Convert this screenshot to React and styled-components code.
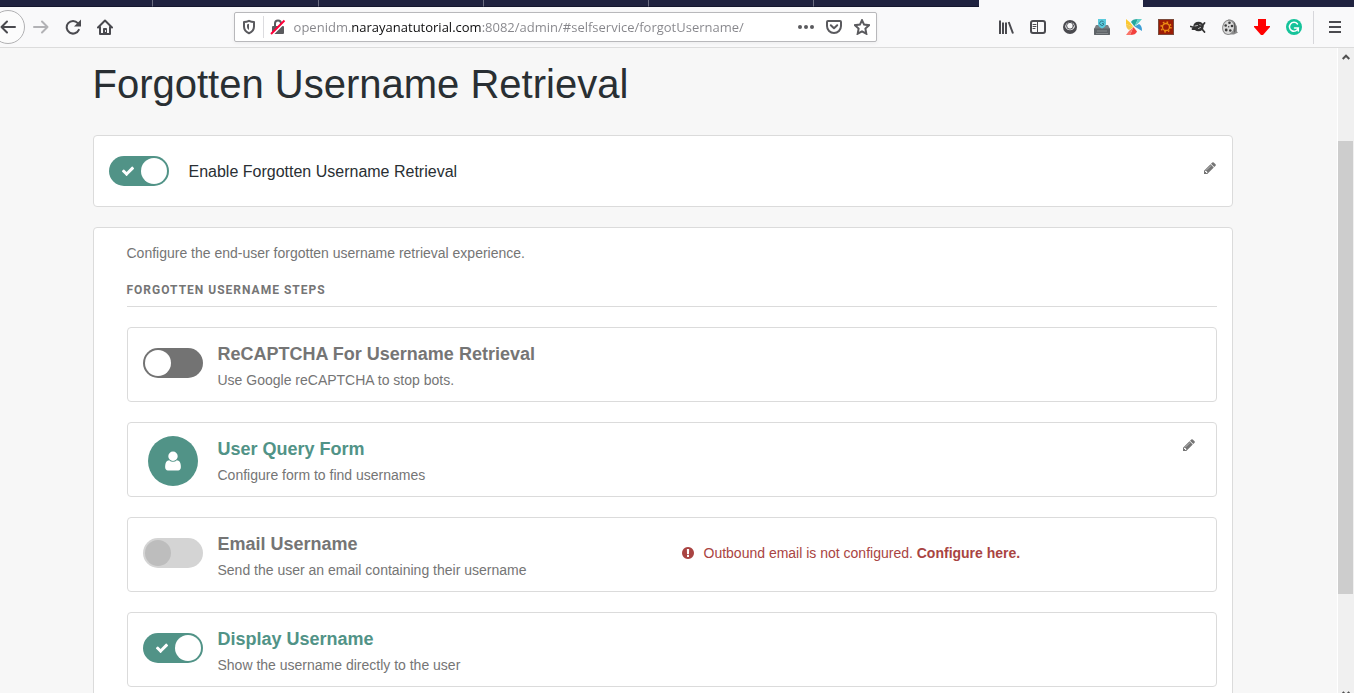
import React, { useState } from 'react';
import styled, { createGlobalStyle, ThemeProvider } from 'styled-components';

const theme = {
  colors: {
    primary: '#519387',
    text: '#292f33',
    muted: '#757575',
    border: '#dbdbdb',
    page: '#f7f7f7',
    danger: '#a94442',
    chrome: '#f9f9fa',
    chromeIcon: '#4a4a4f',
    tabs: '#202340',
  },
  fonts: {
    page: '"Liberation Sans", Arial, sans-serif',
    heading: 'Roboto, "Liberation Sans", sans-serif',
    chrome: '"Open Sans", "Noto Sans", sans-serif',
  },
};

const GlobalStyle = createGlobalStyle`
  * {
    box-sizing: border-box;
  }

  body {
    margin: 0;
    overflow: hidden;
    font-family: ${props => props.theme.fonts.page};
    font-size: 14px;
    line-height: 20px;
    color: ${props => props.theme.colors.muted};
    background: ${props => props.theme.colors.page};
  }

  button {
    background: none;
    border: none;
    padding: 0;
    color: inherit;
    cursor: pointer;
  }
`;

const Browser = styled.div`
  display: flex;
  flex-direction: column;
  height: 100vh;
`;

const TabStrip = styled.div`
  display: flex;
  flex: none;
  height: 7px;
  padding-right: 211px;
  background: ${props => props.theme.colors.tabs};
`;

const Tab = styled.div`
  flex: ${props => (props.$cut ? 153 : 165)} 1 0;
  background: ${props => (props.$active ? props.theme.colors.chrome : 'transparent')};
  border-right: ${props => (props.$last ? 'none' : '1px solid #6b6d80')};
  border-bottom: ${props => (props.$active ? 'none' : '1px solid #15172e')};
`;

const Toolbar = styled.div`
  display: flex;
  align-items: center;
  flex: none;
  height: 41px;
  background: ${props => props.theme.colors.chrome};
  border-bottom: 1px solid #dcdcdc;
  color: ${props => props.theme.colors.chromeIcon};
`;

const ToolButton = styled.button`
  display: flex;
  align-items: center;
  justify-content: center;
  flex: none;
  width: ${props => (props.$small ? '28px' : '32px')};
  height: 28px;
  opacity: ${props => (props.disabled ? 0.4 : 1)};
`;

const BackButton = styled(ToolButton)`
  width: 34px;
  height: 34px;
  margin-left: -9px;
  border: 1px solid #b1b1b3;
  border-radius: 50%;
  background: #fcfcfc;
`;

const MenuButton = styled(ToolButton)`
  width: 41px;
  height: 33px;
  margin-left: 3px;
  padding-left: 2px;
  border-left: 1px solid #d7d7db;
`;

const Spacer = styled.div`
  flex: 10 1 0;
`;

const AddressBar = styled.div`
  display: flex;
  align-items: center;
  flex: 57 1 0;
  height: 30px;
  background: #fff;
  border: 1px solid #b8b8bb;
  border-radius: 2px;
  box-shadow: 0 1px 4px rgba(0, 0, 0, 0.06);
  color: #5a5a5e;
`;

const Divider = styled.div`
  width: 1px;
  height: 22px;
  background: #dcdcdf;
`;

/* the host part of the address is darker than the rest */
const Address = styled.input`
  flex: 1;
  min-width: 0;
  height: 24px;
  margin-left: 2px;
  padding: 0;
  border: none;
  outline: none;
  font-family: ${props => props.theme.fonts.chrome};
  font-size: 13px;
  background: linear-gradient(90deg, #85858a 58px, #0c0c0d 58px, #0c0c0d 188px, #85858a 188px);
  -webkit-background-clip: text;
  background-clip: text;
  -webkit-text-fill-color: transparent;
`;

const Viewport = styled.div`
  display: flex;
  flex: 1;
  min-height: 0;
`;

const Main = styled.main`
  flex: 1;
  overflow: hidden;
  padding: 14px 12px 0 0;
`;

const Container = styled.div`
  max-width: 1140px;
  margin: 0 auto;
`;

const Title = styled.h1`
  margin: 0 0 29px;
  font-size: 40px;
  font-weight: 400;
  line-height: 44px;
  color: ${props => props.theme.colors.text};
`;

const Card = styled.section`
  margin-bottom: 20px;
  background: #fff;
  border: 1px solid ${props => props.theme.colors.border};
  border-radius: 4px;
`;

const EnableCard = styled(Card)`
  display: flex;
  align-items: flex-start;
  padding: 20px 15px;
`;

const EnableLabel = styled.label`
  flex: 1;
  margin-left: 20px;
  padding-top: 6px;
  font-size: 16px;
  color: ${props => props.theme.colors.text};
`;

const StepsCard = styled(Card)`
  padding: 15px 15px 15px 33px;
`;

const Intro = styled.p`
  margin: 0;
`;

const StepsHeading = styled.h2`
  margin: 17px 0 20px;
  padding-bottom: 6px;
  border-bottom: 1px solid ${props => props.theme.colors.border};
  font-family: ${props => props.theme.fonts.heading};
  font-size: 12px;
  font-weight: 700;
  line-height: 20px;
  letter-spacing: 1px;
  text-transform: uppercase;
`;

const StepRow = styled.div`
  display: flex;
  align-items: flex-start;
  margin-bottom: 20px;
  border: 1px solid ${props => props.theme.colors.border};
  border-radius: 4px;
`;

const StepIcon = styled.div`
  display: flex;
  justify-content: center;
  width: 60px;
  margin: ${props => (props.$round ? '13px' : '20px')} 15px 0;
`;

const StepText = styled.div`
  flex: 1;
  padding: 16px 0 11px;
`;

const StepTitle = styled.h3`
  margin: 0 0 6px;
  font-size: 18px;
  font-weight: 700;
  line-height: 20px;
  color: ${props => (props.$on ? props.theme.colors.primary : props.theme.colors.muted)};
`;

const StepDescription = styled.p`
  margin: 0;
`;

const StepAlert = styled.div`
  display: flex;
  align-items: center;
  width: 50%;
  padding: 25px 10px 0 9px;
  color: ${props => props.theme.colors.danger};

  svg {
    margin-right: 9px;
  }
`;

const AlertLink = styled.a`
  font-weight: 700;
  color: inherit;
  text-decoration: none;
`;

const EditButton = styled.button`
  display: flex;
  align-items: center;
  height: 24px;
  margin: ${props => (props.$inRow ? '10px 20px 0 0' : '0')};
`;

const Badge = styled.div`
  display: flex;
  align-items: center;
  justify-content: center;
  width: 50px;
  height: 50px;
  border-radius: 50%;
  background: ${props => props.theme.colors.primary};
  color: #fff;
`;

const Track = styled.span`
  display: flex;
  align-items: center;
  justify-content: ${props => (props.$on ? 'space-between' : 'flex-start')};
  width: 60px;
  height: 30px;
  padding: 0 2px 0 ${props => (props.$on ? '12px' : '2px')};
  border-radius: 15px;
  background: ${props => (props.$on ? props.theme.colors.primary : '#737373')};
  color: #fff;
`;

const Knob = styled.span`
  width: 26px;
  height: 26px;
  border-radius: 50%;
  background: #fff;
`;

const Switch = styled.label`
  display: block;
  flex: none;
  cursor: pointer;

  input {
    position: absolute;
    opacity: 0;
    width: 1px;
    height: 1px;
    margin: 0;
  }

  input:disabled + ${Track} {
    background: #d4d4d4;
  }

  input:disabled + ${Track} ${Knob} {
    background: #bdbdbd;
  }
`;

const Scrollbar = styled.div`
  display: flex;
  flex-direction: column;
  width: 17px;
  padding-right: 1px;
  border-left: 1px solid #fff;
  background: #f0f0f0;
  color: #505050;
`;

const ScrollArrow = styled.div`
  display: flex;
  justify-content: center;
  flex: none;
  height: ${props => (props.$down ? '8px' : '17px')};
  padding-top: 6px;
  overflow: hidden;
`;

const ScrollTrack = styled.div`
  flex: ${props => props.$size} 1 0;
  background: ${props => (props.$thumb ? '#cdcdcd' : 'transparent')};
`;

const GLYPHS = {
  pencil: 'M491 1536l91-91-235-235-91 91v107h128v128h107zm523-928q0-22-22-22-10 0-17 7l-542 542q-7 7-7 17 0 22 22 22 10 0 17-7l542-542q7-7 7-17zm-54-192l416 416-832 832h-416v-416zm683 96q0 53-37 90l-166 166-416-416 166-165q36-38 90-38 53 0 91 38l235 234q37 39 37 91z',
  check: 'M1671 566q0 40-28 68l-724 724-136 136q-28 28-68 28t-68-28l-136-136-362-362q-28-28-28-68t28-68l136-136q28-28 68-28t68 28l294 295 656-657q28-28 68-28t68 28l136 136q28 28 28 68z',
  user: 'M1536 1399q0 109-62.5 187t-150.5 78h-854q-88 0-150.5-78t-62.5-187q0-85 8.5-160.5t31.5-152 58.5-131 94-89 134.5-34.5q131 128 313 128t313-128q76 0 134.5 34.5t94 89 58.5 131 31.5 152 8.5 160.5zm-256-887q0 159-112.5 271.5t-271.5 112.5-271.5-112.5-112.5-271.5 112.5-271.5 271.5-112.5 271.5 112.5 112.5 271.5z',
  alert: 'M896 128q209 0 385.5 103t279.5 279.5 103 385.5-103 385.5-279.5 279.5-385.5 103-385.5-103-279.5-279.5-103-385.5 103-385.5 279.5-279.5 385.5-103zm128 1247v-190q0-14-9-23.5t-22-9.5h-192q-13 0-23 10t-10 23v190q0 13 10 23t23 10h192q13 0 22-9.5t9-23.5zm-2-344l18-621q0-12-10-18-10-8-24-8h-220q-14 0-24 8-10 6-10 18l17 621q0 10 10 17.5t24 7.5h185q14 0 23.5-7.5t10.5-17.5z',
};

const Glyph = ({ name, size = 14 }) => (
  <svg width={size} height={size} viewBox="0 0 1792 1792" fill="currentColor" aria-hidden="true">
    <path d={GLYPHS[name]} />
  </svg>
);

const Icon = ({ children }) => (
  <svg
    width="16"
    height="16"
    viewBox="0 0 16 16"
    fill="none"
    stroke="currentColor"
    strokeWidth="2"
    strokeLinecap="round"
    strokeLinejoin="round"
    aria-hidden="true"
  >
    {children}
  </svg>
);

const BackIcon = () => <Icon><path d="M15 8H1.5M7 2.5L1.5 8L7 13.5" /></Icon>;
const ForwardIcon = () => <Icon><path d="M1 8H14.5M9 2.5L14.5 8L9 13.5" /></Icon>;
const ReloadIcon = () => (
  <Icon>
    <path d="M13.8 10.8A6.3 6.3 0 1 1 12.8 4.2" />
    <path d="M16 0.500V7.500H9Z" fill="currentColor" stroke="none" />
  </Icon>
);
const HomeIcon = () => (
  <Icon>
    <path d="M1 8.500L8 1.500L15 8.500" />
    <path d="M3 8V15H13V8" />
    <path d="M6.500 15V9.500H9.500V15" fill="currentColor" strokeWidth="1" />
    <path d="M8.500 11.500V12.500" stroke="#f9f9fa" strokeWidth="1" />
  </Icon>
);
const ShieldIcon = () => (
  <Icon>
    <path d="M8 1.8C6 2.8 4.4 3 3 3V7.5C3 11 5 13 8 14.2C11 13 13 11 13 7.5V3C11.6 3 10 2.8 8 1.8Z" />
    <path d="M8 4.8V11C6.5 10 6 9 6 7.5V5.4Z" fill="currentColor" stroke="none" />
  </Icon>
);
const InsecureIcon = () => (
  <Icon>
    <path d="M5 7V4.5A3 3 0 0 1 11 4.5V7" />
    <rect x="2" y="7" width="12" height="8" rx="1" fill="currentColor" stroke="none" />
    <path d="M2.5 15.5L15.5 2.5" stroke="#fff" strokeLinecap="butt" />
    <path d="M1 15L14.5 1.5" stroke="#ff0039" strokeLinecap="butt" />
  </Icon>
);
const DotsIcon = () => (
  <Icon>
    <g fill="currentColor" stroke="none">
      <circle cx="2" cy="8" r="2" />
      <circle cx="8" cy="8" r="2" />
      <circle cx="14" cy="8" r="2" />
    </g>
  </Icon>
);
const PocketIcon = () => (
  <Icon>
    <path d="M2 2H14A1 1 0 0 1 15 3V7A7 7 0 0 1 1 7V3A1 1 0 0 1 2 2Z" />
    <path d="M4.8 6.3L8 9.3L11.2 6.3" />
  </Icon>
);
const StarIcon = () => (
  <Icon>
    <path d="M8 1.2L10.100 5.600L15 6.200L11.400 9.600L12.300 14.700L8 12.300L3.700 14.700L4.600 9.600L1 6.200L5.900 5.600Z" strokeLinejoin="miter" />
  </Icon>
);
const LibraryIcon = () => (
  <Icon>
    <path d="M2 1.500V15M5 3.500V15M8 3.500V15M10.700 3L15 14.500" strokeLinecap="butt" />
  </Icon>
);
const SidebarIcon = () => (
  <Icon>
    <rect x="1" y="2" width="14" height="12" rx="2" />
    <path d="M7.5 2V14M3 5.500H6M3 7.500H6M3 9.500H5" strokeWidth="1" />
  </Icon>
);
const AccountIcon = () => (
  <Icon>
    <circle cx="8" cy="8" r="7" fill="currentColor" stroke="none" />
    <path d="M3.200 8A4.800 4.800 0 0 1 12.800 8L11.500 9.800C10.500 10.800 9.500 11.200 8 11.200S5.500 10.800 4.500 9.800Z" fill="#f9f9fa" stroke="none" />
    <circle cx="8" cy="6.800" r="3.400" fill="#f9f9fa" strokeWidth="1" />
  </Icon>
);
const DriveIcon = () => (
  <Icon>
    <g stroke="none">
      <path d="M2 6H14L16 10V15A1 1 0 0 1 15 16H1A1 1 0 0 1 0 15V10Z" fill="#7b8084" />
      <path d="M0 9.500H16V15A1 1 0 0 1 15 16H1A1 1 0 0 1 0 15Z" fill="#5f6468" />
      <path d="M3 11.500H13V12.500H3ZM2 14H14V15H2Z" fill="#85898c" />
      <path d="M4 0H12V5C12 7 10 8.500 8 9.500C6 8.500 4 7 4 5Z" fill="#5bcbdd" />
    </g>
    <path d="M9.800 3A2.200 2.200 0 1 0 10 5L8.500 4.500" stroke="#2f7486" strokeWidth="1" />
  </Icon>
);
const PinwheelIcon = () => (
  <Icon>
    <g stroke="none">
      <path d="M5 3C6 1 8 0 12 0L8.500 7.500Z" fill="#23a79c" />
      <path d="M12 0H16L13 3.500L8.500 7.500Z" fill="#5fd0c8" />
      <path d="M8.500 7.500L13 5C15 6 16 8 16 12Z" fill="#3d9fd6" />
      <path d="M7.500 8L11 12.500C10 15 8 16 4 16Z" fill="#f2403d" />
      <path d="M0 16L3 12L7.500 8L4 16Z" fill="#fa7468" />
      <path d="M0 0L4 3.500L7.500 8L0 5Z" fill="#fdc92f" />
      <path d="M0 5L7.500 8L3 11C1 10 0 8 0 5Z" fill="#f6c84a" />
    </g>
  </Icon>
);
const GearIcon = () => (
  <Icon>
    <rect x="0.5" y="0.500" width="15" height="15" fill="#9c1c06" stroke="#7b4a3a" strokeWidth="1" strokeLinejoin="miter" />
    <circle cx="8" cy="8" r="3.500" stroke="#ee8f14" strokeWidth="1.300" />
    <circle cx="8" cy="8" r="4.900" stroke="#ee8f14" strokeWidth="1.600" strokeDasharray="1.600 2.250" strokeLinecap="butt" />
  </Icon>
);
const BugIcon = () => (
  <Icon>
    <ellipse cx="8.500" cy="7.500" rx="5.200" ry="4.800" fill="#333" stroke="none" />
    <path d="M0.800 7.500L4 8.500M2.500 10L5 10M12 10L14.500 13M13 6L14.500 4" stroke="#333" strokeWidth="1.800" />
    <path d="M5 7L7.500 6.500M8.500 9.500L10.500 8.500" stroke="#bdbdbd" strokeWidth="1" />
    <path d="M9.500 5.500L11 6" stroke="#8d8d8d" strokeWidth="1" />
  </Icon>
);
const ReelIcon = () => (
  <Icon>
    <path d="M6 0.500C12 -0.500 15.500 5 14.500 12L16 13.500L12 15.500H6Z" fill="#8a8a8a" stroke="none" />
    <ellipse cx="6.500" cy="8.300" rx="5.800" ry="7.200" fill="#dadada" stroke="#8a8a8a" strokeWidth="1" transform="rotate(12 6.500 8.300)" />
    <g fill="#3c3c3c" stroke="none">
      <circle cx="7.500" cy="3.700" r="1.300" />
      <circle cx="3.700" cy="6.500" r="1.300" />
      <circle cx="10" cy="7" r="1.300" />
      <circle cx="4.200" cy="11" r="1.400" />
      <circle cx="8.300" cy="11.500" r="1.300" />
      <circle cx="6.700" cy="7.800" r="0.700" />
    </g>
    <path d="M12.500 4V13M14 7V12" stroke="#555" strokeWidth="0.800" />
  </Icon>
);
const DownloadIcon = () => (
  <Icon><path d="M4 0H12V7H16V8L9 16H7L0 8V7H4Z" fill="#fe0000" stroke="none" /></Icon>
);
const GrammarIcon = () => (
  <Icon>
    <circle cx="8" cy="8" r="8" fill="#15c39a" stroke="none" />
    <path d="M11.500 5A4.500 4.500 0 1 0 12.300 9H8.500M12.300 9V12" stroke="#fff" strokeWidth="1.500" strokeLinejoin="miter" />
  </Icon>
);
const MenuIcon = () => <Icon><path d="M2 3H14M2 8H14M2 13H14" strokeLinecap="butt" /></Icon>;

const extensions = [
  { label: 'Library', Art: LibraryIcon },
  { label: 'Sidebars', Art: SidebarIcon },
  { label: 'Account', Art: AccountIcon },
  { label: 'Drive', Art: DriveIcon },
  { label: 'Pinwheel', Art: PinwheelIcon },
  { label: 'Gear', Art: GearIcon },
  { label: 'Debugger', Art: BugIcon },
  { label: 'Video', Art: ReelIcon },
  { label: 'Download', Art: DownloadIcon },
  { label: 'Grammar', Art: GrammarIcon },
];

const steps = [
  {
    id: 'captcha',
    title: 'ReCAPTCHA For Username Retrieval',
    description: 'Use Google reCAPTCHA to stop bots.',
    enabled: false,
  },
  {
    id: 'userQuery',
    title: 'User Query Form',
    description: 'Configure form to find usernames',
    enabled: true,
    required: true,
  },
  {
    id: 'emailUsername',
    title: 'Email Username',
    description: 'Send the user an email containing their username',
    enabled: false,
    needsEmail: true,
  },
  {
    id: 'retrieveUsername',
    title: 'Display Username',
    description: 'Show the username directly to the user',
    enabled: true,
  },
];

const Toggle = ({ id, label, checked, disabled, onChange }) => (
  <Switch>
    <input
      type="checkbox"
      id={id}
      aria-label={label}
      checked={checked}
      disabled={disabled}
      onChange={onChange}
    />
    <Track $on={checked}>
      {checked && <Glyph name="check" />}
      <Knob />
    </Track>
  </Switch>
);

const Step = ({ step }) => {
  const [enabled, setEnabled] = useState(step.enabled);

  return (
    <StepRow>
      <StepIcon $round={step.required}>
        {step.required ? (
          <Badge><Glyph name="user" size={22} /></Badge>
        ) : (
          <Toggle
            id={step.id}
            label={step.title}
            checked={enabled}
            disabled={step.needsEmail}
            onChange={() => setEnabled(!enabled)}
          />
        )}
      </StepIcon>
      <StepText>
        <StepTitle $on={enabled}>{step.title}</StepTitle>
        <StepDescription>{step.description}</StepDescription>
      </StepText>
      {step.needsEmail && (
        <StepAlert>
          <Glyph name="alert" />
          <span>
            Outbound email is not configured. <AlertLink href="#emailsettings">Configure here.</AlertLink>
          </span>
        </StepAlert>
      )}
      {step.required && (
        <EditButton $inRow aria-label="Edit"><Glyph name="pencil" /></EditButton>
      )}
    </StepRow>
  );
};

const BrowserChrome = () => (
  <>
    <TabStrip>
      <Tab $cut />
      <Tab />
      <Tab />
      <Tab />
      <Tab />
      <Tab $last />
      <Tab $active $last />
    </TabStrip>
    <Toolbar>
      <BackButton aria-label="Back"><BackIcon /></BackButton>
      <ToolButton aria-label="Forward" disabled><ForwardIcon /></ToolButton>
      <ToolButton aria-label="Reload"><ReloadIcon /></ToolButton>
      <ToolButton aria-label="Home"><HomeIcon /></ToolButton>
      <Spacer />
      <AddressBar>
        <ToolButton $small aria-label="Tracking protection"><ShieldIcon /></ToolButton>
        <Divider />
        <ToolButton $small aria-label="Connection"><InsecureIcon /></ToolButton>
        <Address
          aria-label="Address"
          spellCheck={false}
          defaultValue="openidm.narayanatutorial.com:8082/admin/#selfservice/forgotUsername/"
        />
        <ToolButton $small aria-label="Page actions"><DotsIcon /></ToolButton>
        <ToolButton $small aria-label="Pocket"><PocketIcon /></ToolButton>
        <ToolButton $small aria-label="Bookmark"><StarIcon /></ToolButton>
      </AddressBar>
      <Spacer />
      {extensions.map(({ label, Art }) => (
        <ToolButton key={label} aria-label={label}><Art /></ToolButton>
      ))}
      <MenuButton aria-label="Menu"><MenuIcon /></MenuButton>
    </Toolbar>
  </>
);

const App = () => {
  const [enabled, setEnabled] = useState(true);

  return (
    <ThemeProvider theme={theme}>
      <GlobalStyle />
      <Browser>
        <BrowserChrome />
        <Viewport>
          <Main>
            <Container>
              <Title>Forgotten Username Retrieval</Title>

              <EnableCard>
                <Toggle id="enable" checked={enabled} onChange={() => setEnabled(!enabled)} />
                <EnableLabel htmlFor="enable">Enable Forgotten Username Retrieval</EnableLabel>
                <EditButton aria-label="Edit"><Glyph name="pencil" /></EditButton>
              </EnableCard>

              <StepsCard>
                <Intro>Configure the end-user forgotten username retrieval experience.</Intro>
                <StepsHeading>Forgotten Username Steps</StepsHeading>
                {steps.map(step => (
                  <Step key={step.id} step={step} />
                ))}
              </StepsCard>
            </Container>
          </Main>
          <Scrollbar>
            <ScrollArrow>
              <svg width="8" height="6" viewBox="0 0 8 6" fill="none" stroke="currentColor" strokeWidth="2">
                <path d="M0.700 5L4 1.700L7.300 5" />
              </svg>
            </ScrollArrow>
            <ScrollTrack $size={76} />
            <ScrollTrack $size={453} $thumb />
            <ScrollTrack $size={91} />
            <ScrollArrow $down>
              <svg width="8" height="6" viewBox="0 0 8 6" fill="none" stroke="currentColor" strokeWidth="2">
                <path d="M0.700 1L4 4.300L7.300 1" />
              </svg>
            </ScrollArrow>
          </Scrollbar>
        </Viewport>
      </Browser>
    </ThemeProvider>
  );
};

export default App;
